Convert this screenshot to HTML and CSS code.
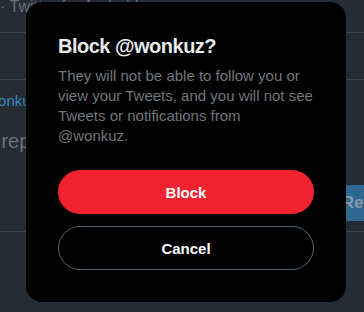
FILE: index.html
```html
<!DOCTYPE html>
<html>
<head>
<meta charset="utf-8">
<link rel="stylesheet" href="styles.css">
</head>
<body>
<div class="page">
  <div class="row row-top"><span class="meta">· Twitter for Android</span></div>
  <div class="row row-mid"></div>
  <div class="compose">
    <div class="replying"><span class="link">@wonkuz</span></div>
    <div class="placeholder">Tweet your reply</div>
    <div class="actions"><span class="reply-btn">Reply</span></div>
  </div>
</div>
<div class="modal" role="dialog">
  <h1 class="title">Block @wonkuz?</h1>
  <p class="desc">They will not be able to follow you or view your Tweets, and you will not see Tweets or notifications from @wonkuz.</p>
  <button class="btn btn-block">Block</button>
  <button class="btn btn-cancel">Cancel</button>
</div>
</body>
</html>
```
FILE: styles.css
```css
html, body {
  margin: 0;
  padding: 0;
}
body {
  width: 364px;
  height: 312px;
  overflow: hidden;
  background: #252c33;
  font-family: "Liberation Sans", Arial, sans-serif;
}
.page {
  display: flex;
  flex-direction: column;
}
.row {
  border-bottom: 1px solid #3b434b;
}
.row-top {
  height: 32px;
}
.meta {
  display: block;
  margin-top: -3px;
  margin-left: 0;
  font-size: 16px;
  line-height: 20px;
  color: #66717b;
  white-space: nowrap;
}
.row-mid {
  height: 46px;
}
.compose {
  height: 151px;
  border-bottom: 1px solid #3b434b;
  display: flex;
  flex-direction: column;
}
.replying {
  margin-top: 11px;
  margin-left: -28px;
  font-size: 15px;
  line-height: 20px;
}
.link {
  color: #3588c3;
}
.placeholder {
  margin-top: 18px;
  margin-left: -102px;
  font-size: 20px;
  line-height: 24px;
  color: #6b747d;
  white-space: nowrap;
}
.actions {
  margin-top: 32px;
  display: flex;
  justify-content: flex-end;
  margin-right: -40px;
}
.reply-btn {
  display: inline-flex;
  align-items: center;
  height: 36px;
  padding: 0 16px;
  background: #2e6893;
  color: #8a98a4;
  font-weight: bold;
  font-size: 17px;
}
.modal {
  position: fixed;
  left: 26px;
  top: 2px;
  width: 320px;
  height: 300px;
  box-sizing: border-box;
  padding: 32px;
  background: #000;
  border-radius: 16px;
  display: flex;
  flex-direction: column;
}
.title {
  margin: 0;
  font-size: 20px;
  line-height: 24px;
  font-weight: bold;
  letter-spacing: -0.5px;
  color: #e7e9ea;
}
.desc {
  margin: 8px 0 0;
  font-size: 15px;
  line-height: 20px;
  color: #71767b;
}
.btn {
  height: 44px;
  border-radius: 22px;
  font-family: "Liberation Sans", Arial, sans-serif;
  font-size: 15px;
  font-weight: bold;
  color: #fff;
  cursor: pointer;
}
.btn-block {
  margin-top: 24px;
  background: #f4212e;
  border: none;
}
.btn-cancel {
  margin-top: 12px;
  background: transparent;
  border: 1px solid #536471;
}
```
